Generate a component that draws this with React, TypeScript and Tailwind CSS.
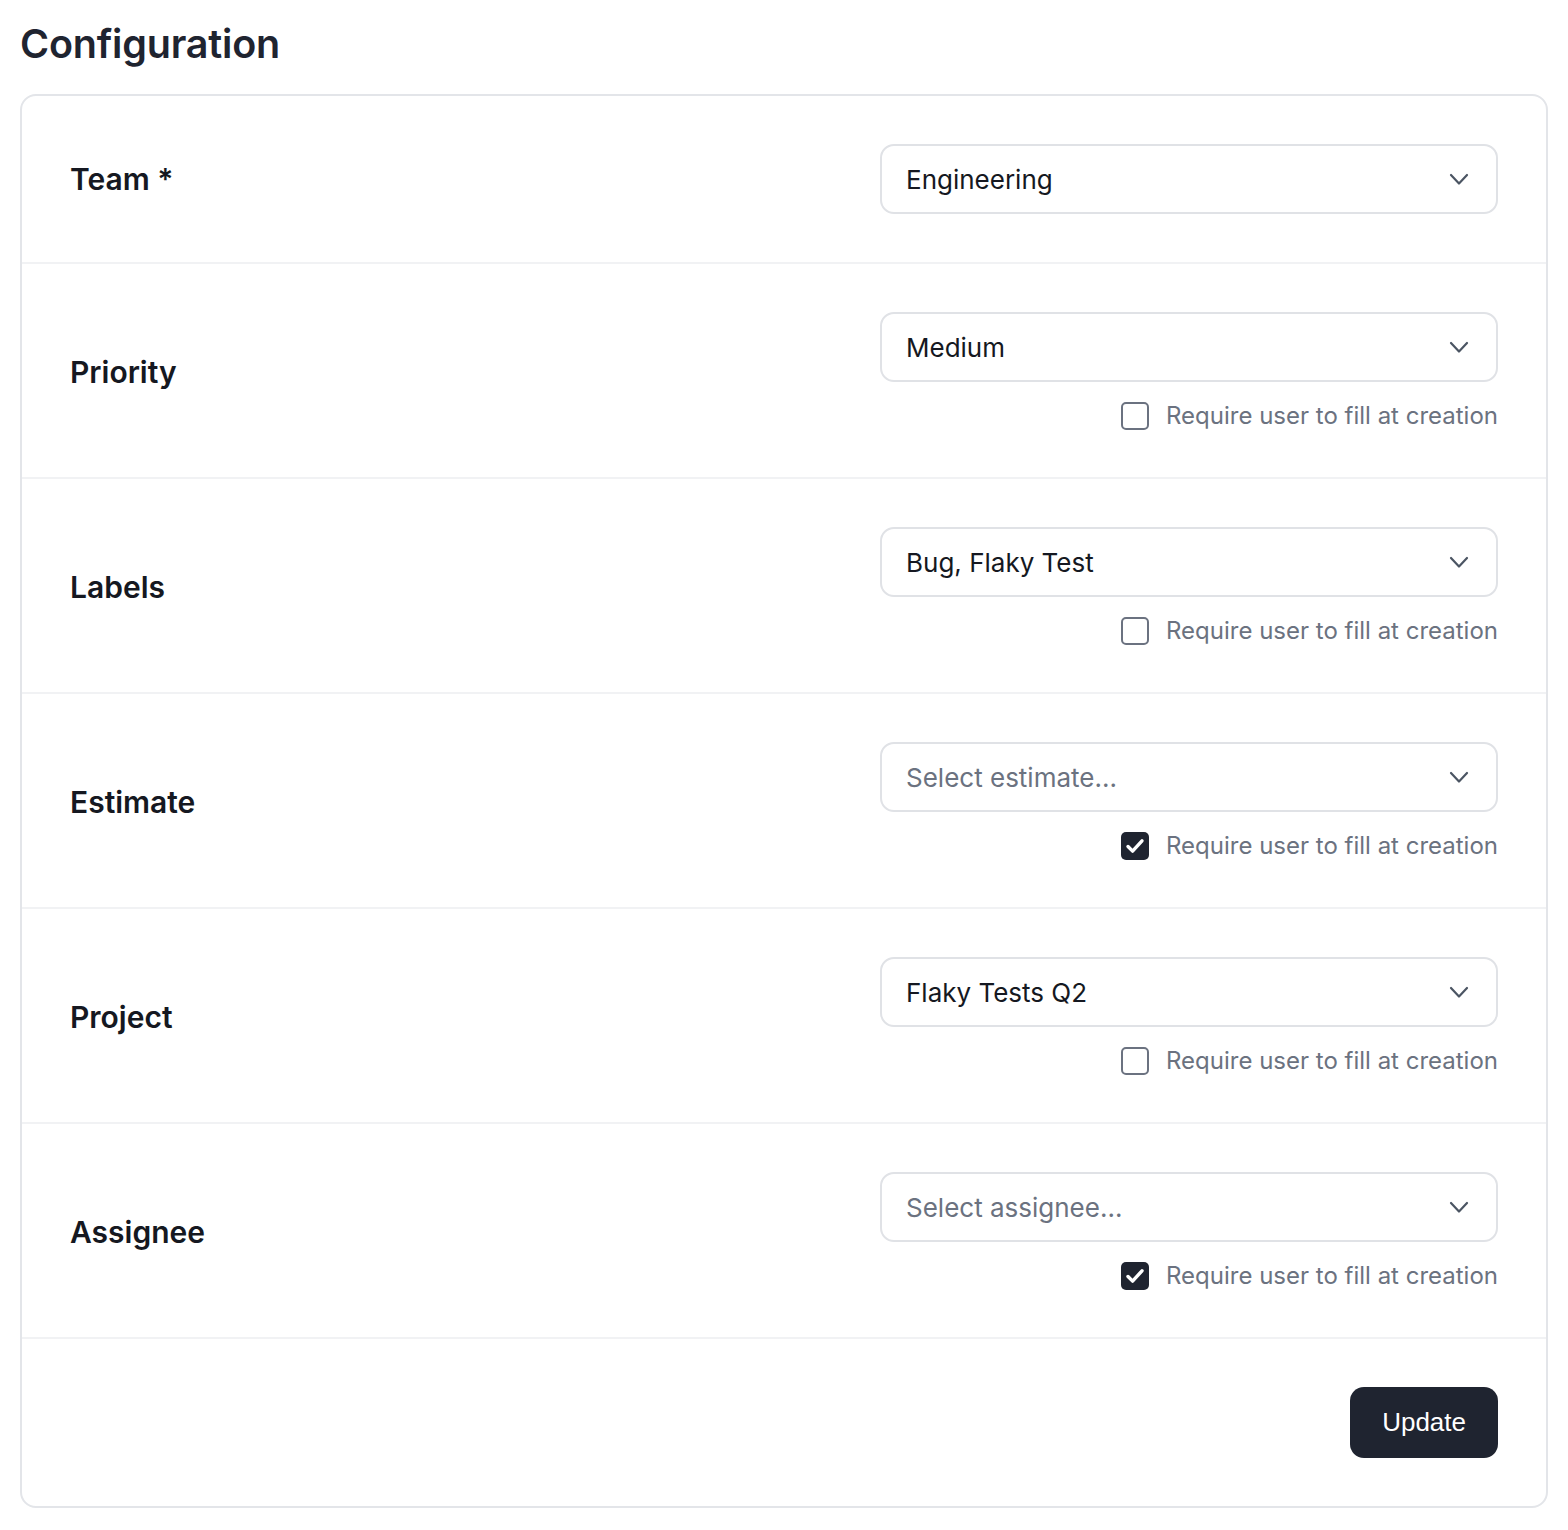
import React from "react";

type Row = {
  label: string;
  value: string;
  placeholder?: boolean;
  check?: boolean | null;
};

const rows: Row[] = [
  { label: "Team *", value: "Engineering", check: null },
  { label: "Priority", value: "Medium", check: false },
  { label: "Labels", value: "Bug, Flaky Test", check: false },
  { label: "Estimate", value: "Select estimate...", placeholder: true, check: true },
  { label: "Project", value: "Flaky Tests Q2", check: false },
  { label: "Assignee", value: "Select assignee...", placeholder: true, check: true },
];

function Chevron() {
  return (
    <svg width="32" height="32" viewBox="0 0 32 32" fill="none" className="shrink-0">
      <path d="M8 12l8 8.5 8-8.5" stroke="#4b5563" strokeWidth="2.2" strokeLinecap="round" strokeLinejoin="round" />
    </svg>
  );
}

function Checkbox({ checked }: { checked: boolean }) {
  if (checked) {
    return (
      <div className="w-[28px] h-[28px] rounded-[5px] bg-[#1f2430] flex items-center justify-center shrink-0">
        <svg width="28" height="28" viewBox="0 0 28 28" fill="none">
          <path d="M7 14.5l4.6 4.6L21 8.8" stroke="white" strokeWidth="3.4" strokeLinecap="round" strokeLinejoin="round" />
        </svg>
      </div>
    );
  }
  return <div className="w-[28px] h-[28px] rounded-[5px] border-2 border-[#6b7280] bg-white shrink-0" />;
}

export default function App() {
  return (
    <div className="min-h-screen bg-white font-[Inter,sans-serif] px-[20px] pt-4 pb-5">
      <h1 className="text-[39.5px] leading-[56px] font-semibold text-[#1f2430] mb-[22px] tracking-[-0.2px]">Configuration</h1>
      <div className="border-2 border-[#e3e5e9] rounded-[16px] bg-white">
        {rows.map((r, i) => (
          <div
            key={r.label}
            className={`flex items-center justify-between px-12 border-b-2 border-[#f1f2f4] ${i === 0 ? "py-12" : "pt-12 pb-[45px]"}`}
          >
            <div className="text-[30px] font-semibold text-[#151821]">{r.label}</div>
            <div className="w-[618px] flex flex-col items-end">
              <div className="h-[70px] w-full rounded-[14px] border-2 border-[#e0e2e6] bg-white pl-6 pr-[21px] flex items-center justify-between">
                <span className={`text-[26px] ${r.placeholder ? "text-[#6b7280]" : "text-[#151821]"}`}>{r.value}</span>
                <Chevron />
              </div>
              {r.check !== null && r.check !== undefined && (
                <div className="mt-[18px] h-8 flex items-center gap-[17px]">
                  <Checkbox checked={r.check} />
                  <span className="text-[24px] text-[#6b7280]">Require user to fill at creation</span>
                </div>
              )}
            </div>
          </div>
        ))}
        <div className="flex justify-end px-12 py-12">
          <button className="h-[71px] px-8 rounded-[14px] bg-[#1f2430] text-white text-[26px] font-['Liberation_Sans',Arial,sans-serif]">
            Update
          </button>
        </div>
      </div>
    </div>
  );
}
